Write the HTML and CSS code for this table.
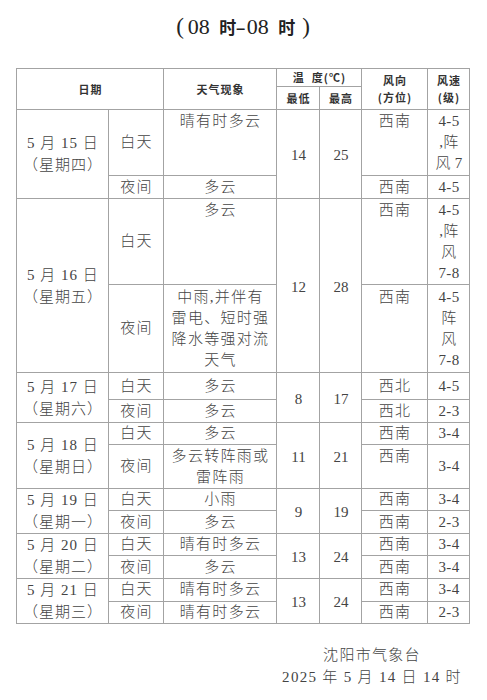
FILE: index.html
```html
<!DOCTYPE html>
<html lang="zh-CN">
<head>
<meta charset="utf-8">
<title>沈阳市天气预报</title>
<link rel="stylesheet" href="styles.css">
</head>
<body>
<main class="page">
  <h1 class="title"><span class="p p-l">(</span>08 <span class="h">时</span><span class="d">-</span>08 <span class="h">时</span><span class="p p-r">)</span></h1>
  <table class="fc">
    <colgroup>
      <col class="c-date"><col class="c-per"><col class="c-wx"><col class="c-t"><col class="c-t2"><col class="c-dir"><col class="c-spd">
    </colgroup>
    <thead>
      <tr class="hr1">
        <th rowspan="2" colspan="2">日期</th>
        <th rowspan="2">天气现象</th>
        <th colspan="2">温&nbsp;&nbsp;度(℃)</th>
        <th rowspan="2">风向<br>(方位)</th>
        <th rowspan="2">风速<br>(级)</th>
      </tr>
      <tr class="hr2">
        <th>最低</th>
        <th>最高</th>
      </tr>
    </thead>
    <tbody>
      <tr class="h66">
        <td rowspan="2" class="date">5 月 15 日<br>（星期四）</td>
        <td>白天</td>
        <td class="top">晴有时多云</td>
        <td rowspan="2" class="num">14</td>
        <td rowspan="2" class="num">25</td>
        <td class="top">西南</td>
        <td class="top spd">4-5<br>,阵<br>风 7</td>
      </tr>
      <tr class="h23">
        <td>夜间</td>
        <td>多云</td>
        <td>西南</td>
        <td class="spd">4-5</td>
      </tr>
      <tr class="h86">
        <td rowspan="2" class="date">5 月 16 日<br>（星期五）</td>
        <td>白天</td>
        <td class="top">多云</td>
        <td rowspan="2" class="num">12</td>
        <td rowspan="2" class="num">28</td>
        <td class="top">西南</td>
        <td class="top spd">4-5<br>,阵<br>风<br>7-8</td>
      </tr>
      <tr class="h88">
        <td>夜间</td>
        <td class="top pt2">中雨,并伴有<br>雷电、短时强<br>降水等强对流<br>天气</td>
        <td class="top pt2">西南</td>
        <td class="top pt2 spd">4-5<br>阵<br>风<br>7-8</td>
      </tr>
      <tr class="h27">
        <td rowspan="2" class="date">5 月 17 日<br>（星期六）</td>
        <td>白天</td>
        <td>多云</td>
        <td rowspan="2" class="num">8</td>
        <td rowspan="2" class="num">17</td>
        <td>西北</td>
        <td class="spd">4-5</td>
      </tr>
      <tr class="h23">
        <td>夜间</td>
        <td>多云</td>
        <td>西北</td>
        <td class="spd">2-3</td>
      </tr>
      <tr class="h21">
        <td rowspan="2" class="date">5 月 18 日<br>（星期日）</td>
        <td>白天</td>
        <td>多云</td>
        <td rowspan="2" class="num">11</td>
        <td rowspan="2" class="num">21</td>
        <td>西南</td>
        <td class="spd">3-4</td>
      </tr>
      <tr class="h44">
        <td>夜间</td>
        <td>多云转阵雨或<br>雷阵雨</td>
        <td class="top">西南</td>
        <td class="spd">3-4</td>
      </tr>
      <tr class="h22">
        <td rowspan="2" class="date">5 月 19 日<br>（星期一）</td>
        <td>白天</td>
        <td>小雨</td>
        <td rowspan="2" class="num">9</td>
        <td rowspan="2" class="num">19</td>
        <td>西南</td>
        <td class="spd">3-4</td>
      </tr>
      <tr class="h23">
        <td>夜间</td>
        <td>多云</td>
        <td>西南</td>
        <td class="spd">2-3</td>
      </tr>
      <tr class="h22">
        <td rowspan="2" class="date">5 月 20 日<br>（星期二）</td>
        <td>白天</td>
        <td>晴有时多云</td>
        <td rowspan="2" class="num">13</td>
        <td rowspan="2" class="num">24</td>
        <td>西南</td>
        <td class="spd">3-4</td>
      </tr>
      <tr class="h23">
        <td>夜间</td>
        <td>多云</td>
        <td>西南</td>
        <td class="spd">3-4</td>
      </tr>
      <tr class="h22">
        <td rowspan="2" class="date">5 月 21 日<br>（星期三）</td>
        <td>白天</td>
        <td>晴有时多云</td>
        <td rowspan="2" class="num">13</td>
        <td rowspan="2" class="num">24</td>
        <td>西南</td>
        <td class="spd">3-4</td>
      </tr>
      <tr class="h22">
        <td>夜间</td>
        <td>晴有时多云</td>
        <td>西南</td>
        <td class="spd">2-3</td>
      </tr>
    </tbody>
  </table>
  <div class="sign">
    <div class="sign-box">
      <p>沈阳市气象台</p>
      <p>2025 年 5 月 14 日 14 时</p>
    </div>
  </div>
</main>
</body>
</html>
```
FILE: styles.css
```css
body {
  margin: 0;
  background: #fff;
  color: #444;
  font-family: "Liberation Serif", "Noto Sans CJK SC", serif;
}

.page {
  padding: 14px 0 0 16px;
}

.title {
  width: 454px;
  margin: 0 0 28px;
  text-align: center;
  font-size: 22px;
  font-weight: normal;
  line-height: 26px;
  color: #222;
}

.title .h {
  font-family: "Noto Sans CJK SC", sans-serif;
  font-weight: 700;
  font-size: 17px;
  margin-left: 4px;
}

.title .d {
  margin: 0 2px 0 1px;
  display: inline-block;
  transform: scaleX(1.4);
}

.title .p {
  font-size: 23px;
}

.title .p-l {
  margin-right: 4px;
}

.title .p-r {
  margin-left: 7px;
}

.fc {
  border-collapse: collapse;
  table-layout: fixed;
  width: 454px;
}

.c-date { width: 92px; }
.c-per { width: 55px; }
.c-wx { width: 113px; }
.c-t { width: 43px; }
.c-t2 { width: 42px; }
.c-dir { width: 66px; }
.c-spd { width: 42px; }

.fc th,
.fc td {
  border: 1px solid #a3a3a3;
  padding: 0 0 0 1px;
  text-align: center;
  vertical-align: middle;
}

.fc th {
  font-family: "Noto Sans CJK SC", sans-serif;
  font-size: 11px;
  font-weight: 700;
  line-height: 17px;
  letter-spacing: 1px;
  color: #333;
}

.fc td {
  font-size: 15px;
  font-weight: 300;
  line-height: 21px;
  letter-spacing: 1.3px;
}

.fc td.top {
  vertical-align: top;
  padding-top: 1px;
}

.fc td.pt2 {
  padding-top: 2px;
}

.fc td.date {
  line-height: 22px;
  letter-spacing: 1px;
}

.fc td.num {
  letter-spacing: 0;
  padding-top: 3px;
}

.fc td.spd {
  letter-spacing: 0.3px;
}

.hr1 { height: 18px; }
.hr2 { height: 23px; }
.h21 { height: 21px; }
.h22 { height: 22px; }
.h23 { height: 23px; }
.h27 { height: 27px; }
.h44 { height: 44px; }
.h66 { height: 66px; }
.h86 { height: 86px; }
.h88 { height: 88px; }

.sign {
  width: 454px;
  display: flex;
  justify-content: flex-end;
  margin-top: 20px;
}

.sign-box {
  width: 196px;
  text-align: center;
  font-size: 15px;
  font-weight: 300;
  line-height: 22px;
  letter-spacing: 1.3px;
}

.sign-box p {
  margin: 0;
}
```
